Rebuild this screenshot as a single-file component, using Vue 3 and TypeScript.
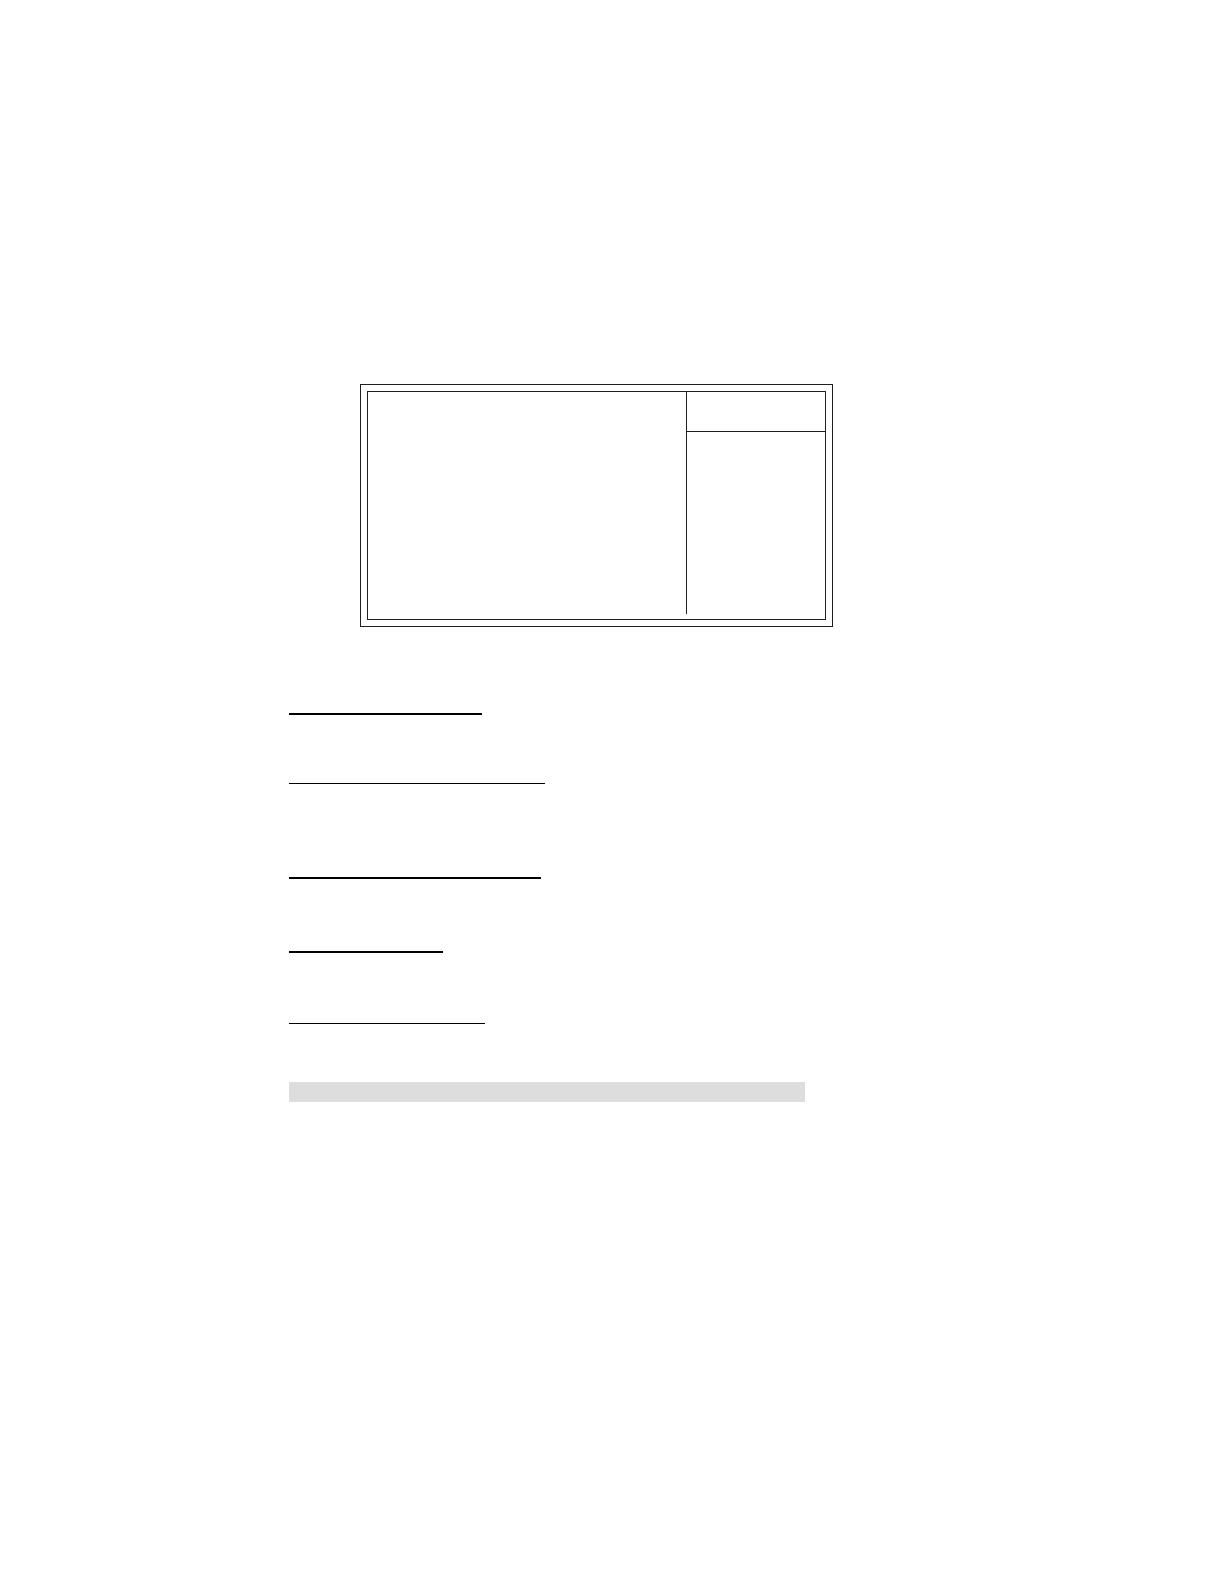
<script setup lang="ts">
interface Section {
  id: string
  rule: number
  weight: 'thin' | 'thick'
}

const sections: Section[] = [
  { id: 'first', rule: 193, weight: 'thick' },
  { id: 'second', rule: 256, weight: 'thin' },
  { id: 'third', rule: 252, weight: 'thick' },
  { id: 'fourth', rule: 154, weight: 'thick' },
  { id: 'fifth', rule: 196, weight: 'thin' },
]
</script>

<template>
  <main class="page">
    <div class="frame">
      <div class="screen">
        <div class="options"></div>
        <div class="help">
          <div class="help-head"></div>
        </div>
      </div>
    </div>

    <div class="sections">
      <div
        v-for="section in sections"
        :key="section.id"
        class="rule"
        :class="[section.weight, section.id]"
        :style="{ width: section.rule + 'px' }"
      ></div>
    </div>

    <div class="bar"></div>
  </main>
</template>

<style>
body {
  background: #fff;
}
</style>

<style scoped>
.page {
  box-sizing: border-box;
  max-width: 805px;
  padding: 384px 0 0 289px;
}

.page * {
  box-sizing: border-box;
}

.frame {
  margin: 0 -28px 0 71px;
  padding: 6px;
  border: 1px solid #231f20;
}

.screen {
  display: flex;
  min-height: 229px;
  padding-bottom: 5px;
  border: 1px solid #231f20;
}

.options {
  flex: 1;
}

.help {
  flex: 0 0 139px;
  border-left: 1px solid #231f20;
}

.help-head {
  height: 40px;
  border-bottom: 1px solid #231f20;
}

.sections {
  display: flex;
  flex-direction: column;
}

.rule {
  background: #000;
}

.thin {
  height: 1px;
}

.thick {
  height: 2px;
}

.first {
  margin-top: 86px;
}

.second {
  margin-top: 68px;
}

.third {
  margin-top: 93px;
}

.fourth {
  margin-top: 72px;
}

.fifth {
  margin-top: 70px;
}

.bar {
  height: 20px;
  margin-top: 58px;
  background: #ddd;
}
</style>
